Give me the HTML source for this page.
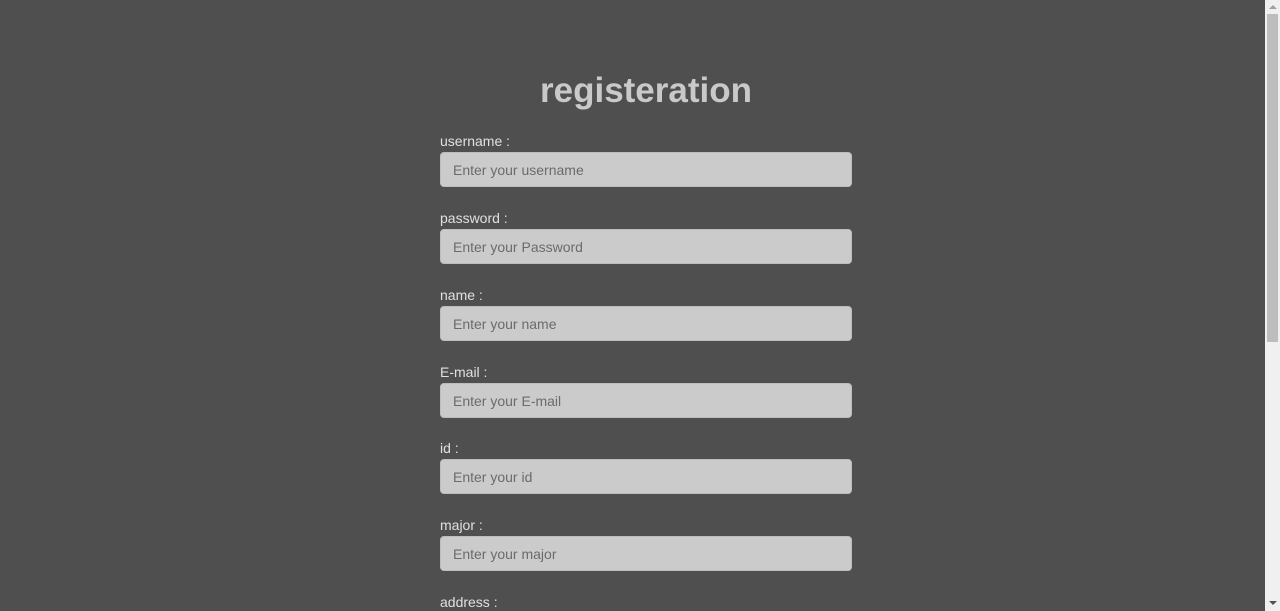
<!DOCTYPE html>
<html><head><style>
html,body{margin:0;width:1280px;height:611px;overflow:hidden;background:#4f4f4f;font-family:"Liberation Sans",sans-serif;position:relative}
h1{position:absolute;left:0;width:1292px;top:69px;margin:0;text-align:center;font-size:35px;font-weight:bold;color:#c9c9c9;line-height:44px}
.f{position:absolute;left:440px;width:412px}
.f label{display:block;color:#e0e0e0;font-size:14px;height:20px;line-height:22px}
.f div{margin-top:2px;height:35px;box-sizing:border-box;background:#cbcbcb;border:1px solid #bdbdbd;border-radius:4px;color:#6b6b6b;font-size:14px;line-height:35px;padding-left:12px}
.sb{position:absolute;right:0;top:0;width:15px;height:611px;background:#f0f0f0}
.th{position:absolute;right:2px;top:14px;width:11px;height:328px;background:#bdbdbd}
</style></head><body>
<h1>registeration</h1>
<div class="f" style="top:130px"><label>username :</label><div>Enter your username</div></div>
<div class="f" style="top:207px"><label>password :</label><div>Enter your Password</div></div>
<div class="f" style="top:284px"><label>name :</label><div>Enter your name</div></div>
<div class="f" style="top:361px"><label>E-mail :</label><div>Enter your E-mail</div></div>
<div class="f" style="top:437px"><label>id :</label><div>Enter your id</div></div>
<div class="f" style="top:514px"><label>major :</label><div>Enter your major</div></div>
<div class="f" style="top:591px"><label>address :</label></div>
<div class="sb"><div class="th"></div>
<div style="position:absolute;left:4px;top:5px;width:0;height:0;border-left:4px solid transparent;border-right:4px solid transparent;border-bottom:4px solid #a0a0a0"></div>
<div style="position:absolute;left:4px;top:601px;width:0;height:0;border-left:4px solid transparent;border-right:4px solid transparent;border-top:4px solid #505050"></div>
</div>
</body></html>
